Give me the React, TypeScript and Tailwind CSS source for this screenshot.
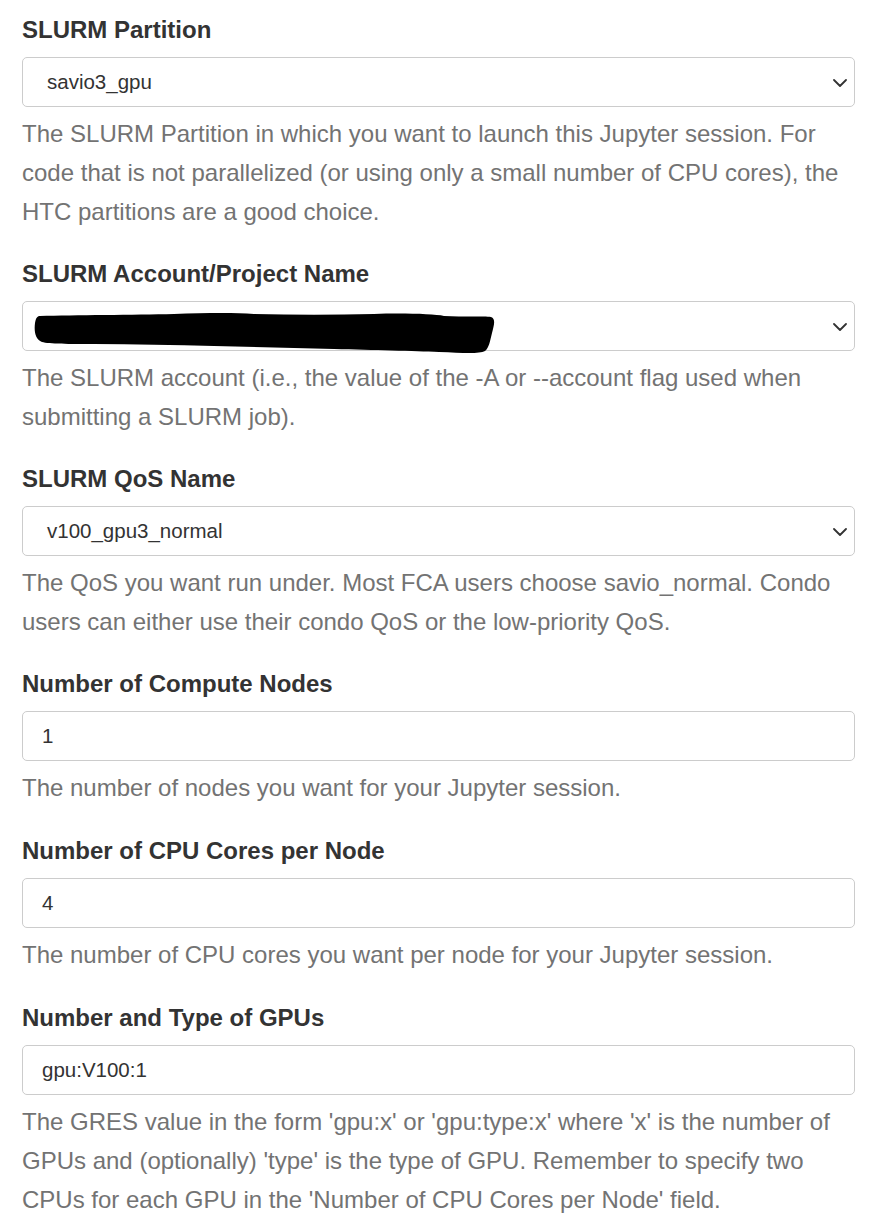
import React from "react";

const font = { fontFamily: '"Liberation Sans", Arial, sans-serif' };

function Chevron() {
  return (
    <svg width="14" height="8" viewBox="0 0 14 8" className="absolute right-[7px] top-[21px]">
      <path d="M1 1 L7 7 L13 1" fill="none" stroke="#333" strokeWidth="1.8" strokeLinecap="round" strokeLinejoin="round" />
    </svg>
  );
}

function Redaction() {
  return (
    <svg width="462" height="41" viewBox="0 0 462 41" className="absolute left-[11px] top-[11px]">
      <path
        d="M6 3 C40 2 100 2 140 1 C170 0 200 -0.5 220 1 C260 2 300 2 340 1 C370 0 400 1 410 3 C430 4 450 3 457 4 C462 6 460 12 458 20 C456 28 455 35 451 38 C445 41 430 40 405 39 C380 38 340 37 300 36 C260 35 220 34 180 33 C140 32 100 31 60 31 C35 31 15 31 8 29 C1 26 0 18 1 10 C2 5 3 3 6 3 Z"
        fill="#000"
      />
    </svg>
  );
}

function Field({
  label,
  value,
  select,
  redacted,
  wide,
  help,
}: {
  label: string;
  value?: string;
  select?: boolean;
  redacted?: boolean;
  wide?: boolean;
  help: string;
}) {
  return (
    <div className={wide ? "mb-[29px]" : "mb-[28px]"}>
      <div className="h-[30px] leading-[30px] text-[24px] font-bold text-[#333333] mb-[12px]">{label}</div>
      <div
        className={`relative h-[50px] rounded-[5px] border border-[#cccccc] bg-white flex items-center text-[20.5px] text-[#333333] ${
          select ? "pl-[24px]" : "pl-[19px]"
        }`}
      >
        {redacted ? <Redaction /> : <span>{value}</span>}
        {select && <Chevron />}
      </div>
      <p className="mt-[7px] text-[24px] leading-[39px] text-[#737373]">{help}</p>
    </div>
  );
}

export default function App() {
  return (
    <div className="min-h-[1227px] bg-white pt-[15px] pl-[22px] w-[855px]" style={font}>
      <Field
        label="SLURM Partition"
        value="savio3_gpu"
        select
        help="The SLURM Partition in which you want to launch this Jupyter session. For code that is not parallelized (or using only a small number of CPU cores), the HTC partitions are a good choice."
      />
      <Field
        label="SLURM Account/Project Name"
        select
        redacted
        help="The SLURM account (i.e., the value of the -A or --account flag used when submitting a SLURM job)."
      />
      <Field
        label="SLURM QoS Name"
        value="v100_gpu3_normal"
        select
        help="The QoS you want run under. Most FCA users choose savio_normal. Condo users can either use their condo QoS or the low-priority QoS."
      />
      <Field
        label="Number of Compute Nodes"
        value="1"
        wide
        help="The number of nodes you want for your Jupyter session."
      />
      <Field
        label="Number of CPU Cores per Node"
        value="4"
        wide
        help="The number of CPU cores you want per node for your Jupyter session."
      />
      <Field
        label="Number and Type of GPUs"
        value="gpu:V100:1"
        help="The GRES value in the form 'gpu:x' or 'gpu:type:x' where 'x' is the number of GPUs and (optionally) 'type' is the type of GPU. Remember to specify two CPUs for each GPU in the 'Number of CPU Cores per Node' field."
      />
    </div>
  );
}
